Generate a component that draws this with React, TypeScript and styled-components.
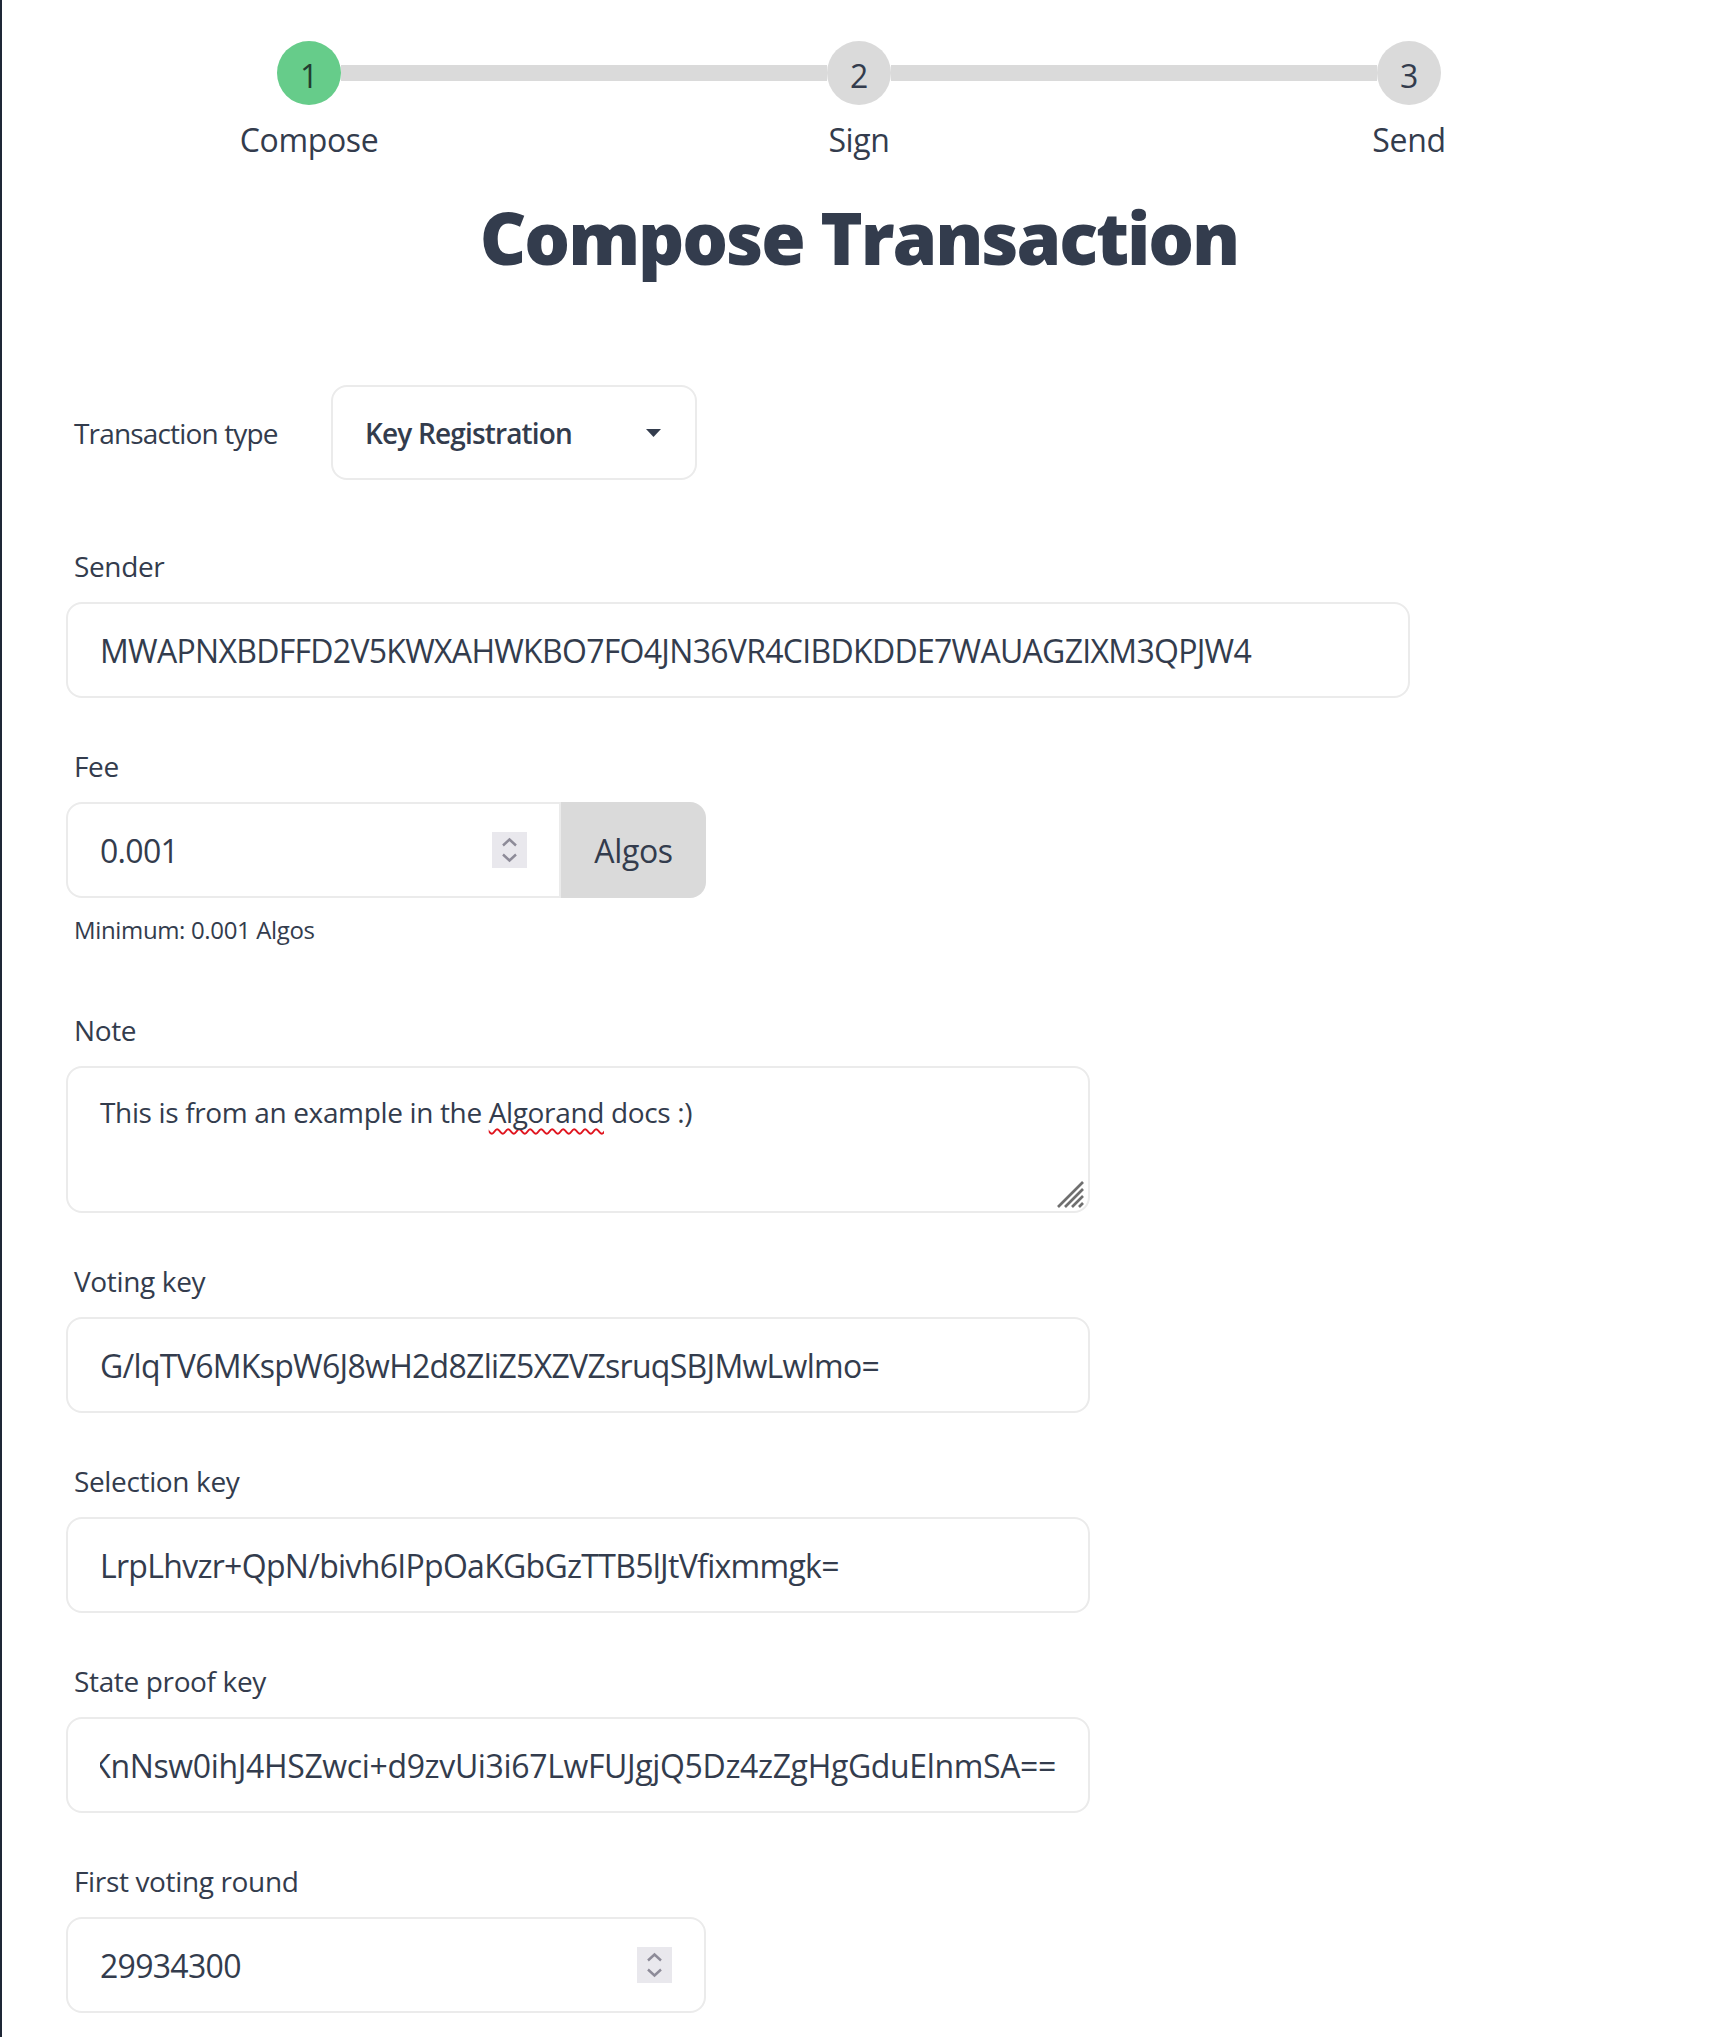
import React from "react";
import styled, { createGlobalStyle } from "styled-components";

const FONT = `"Open Sans", "Noto Sans", sans-serif`;
const TEXT = "#333c4d";
const BORDER = "#ebebeb";
const GRAY = "#dadada";
const TRACK = "-0.022em";

const GlobalStyle = createGlobalStyle`
  html, body { margin: 0; padding: 0; background: #ffffff; }
  body { font-family: ${FONT}; color: ${TEXT}; letter-spacing: ${TRACK}; }
  *, *::before, *::after { box-sizing: border-box; }
`;

const Shell = styled.div`
  min-height: 100vh;
  border-left: 2px solid #1e2736;
  padding: 41px 32px 80px 32px;
`;

const Steps = styled.ol`
  list-style: none;
  margin: 0;
  padding: 0;
  display: grid;
  grid-template-columns: repeat(3, 1fr);
`;

const Step = styled.li`
  display: flex;
  flex-direction: column;
`;

const Track = styled.div`
  display: flex;
  align-items: center;
  height: 64px;
`;

const Connector = styled.span<{ $hidden?: boolean }>`
  flex: 1;
  height: 16px;
  background: ${(p) => (p.$hidden ? "transparent" : GRAY)};
`;

const Bubble = styled.span<{ $active?: boolean }>`
  width: 64px;
  height: 64px;
  flex: 0 0 64px;
  border-radius: 50%;
  display: flex;
  align-items: center;
  justify-content: center;
  padding-top: 5px;
  background: ${(p) => (p.$active ? "#66cc8a" : GRAY)};
  color: ${(p) => (p.$active ? "#223d30" : TEXT)};
  font-size: 32px;
  line-height: 1;
`;

const StepLabel = styled.span`
  text-align: center;
  font-size: 32px;
  line-height: 48px;
  margin-top: 11px;
`;

const Title = styled.h1`
  margin: 33px 0 0;
  text-align: center;
  font-size: 72px;
  line-height: 80px;
  font-weight: 800;
  letter-spacing: -0.029em;
  color: ${TEXT};
`;

const Form = styled.form`
  display: flex;
  flex-direction: column;
  padding-left: 32px;
  margin-top: 108px;
`;

const TypeRow = styled.div`
  display: grid;
  grid-template-columns: 265px auto;
  align-items: center;
  justify-content: start;
  margin-bottom: 50px;
`;

const TypeLabel = styled.label`
  padding: 0 8px;
  font-size: 28px;
  line-height: 40px;
  letter-spacing: -0.03em;
`;

const SelectBox = styled.div`
  width: 366px;
  height: 95px;
  border: 2px solid ${BORDER};
  border-radius: 16px;
  padding: 0 34px 0 32px;
  display: flex;
  align-items: center;
  justify-content: space-between;
  font-size: 28px;
  font-weight: 600;
  letter-spacing: -0.03em;
`;

const Fields = styled.div`
  display: flex;
  flex-direction: column;
  gap: 32px;
`;

const Control = styled.div<{ $max: number }>`
  display: flex;
  flex-direction: column;
  width: 100%;
  max-width: ${(p) => p.$max}px;
`;

const FieldLabel = styled.label`
  display: block;
  padding: 16px 8px;
  font-size: 28px;
  line-height: 40px;
`;

const Hint = styled.span`
  display: block;
  padding: 16px 8px;
  font-size: 24px;
  line-height: 32px;
`;

const TextInput = styled.input`
  height: 96px;
  width: 100%;
  border: 2px solid ${BORDER};
  border-radius: 16px;
  padding: 0 32px;
  font-family: ${FONT};
  font-size: 32px;
  letter-spacing: ${TRACK};
  color: ${TEXT};
  background: #ffffff;
  outline: none;
`;

const FieldBox = styled.div<{ $joined?: boolean }>`
  flex: ${(p) => (p.$joined ? "1 1 0" : "0 0 auto")};
  min-width: 0;
  height: 96px;
  border: 2px solid ${BORDER};
  border-radius: ${(p) => (p.$joined ? "16px 0 0 16px" : "16px")};
  padding: 0 32px;
  display: flex;
  align-items: center;
  background: #ffffff;
`;

const BareInput = styled.input`
  flex: 1 1 0;
  width: 0;
  min-width: 0;
  border: none;
  outline: none;
  padding: 0;
  font-family: ${FONT};
  font-size: 32px;
  letter-spacing: ${TRACK};
  color: ${TEXT};
  background: transparent;
`;

const Clip = styled.div`
  flex: 1;
  min-width: 0;
  overflow: hidden;
  display: flex;
  justify-content: flex-end;
  white-space: nowrap;
  font-size: 32px;
`;

const ClipText = styled.span`
  flex-shrink: 0;
`;

const Join = styled.div`
  display: flex;
  width: 640px;
`;

const Addon = styled.span`
  flex: 0 0 145px;
  display: flex;
  align-items: center;
  justify-content: center;
  background: ${GRAY};
  border-radius: 0 16px 16px 0;
  font-size: 32px;
`;

const Spin = styled.svg`
  flex: 0 0 35px;
  width: 35px;
  height: 36px;
  display: block;
`;

const NoteBox = styled.div`
  position: relative;
  height: 147px;
  border: 2px solid ${BORDER};
  border-radius: 16px;
  padding: 16px 32px;
  font-size: 28px;
  line-height: 56px;
`;

const Misspelled = styled.span`
  text-decoration: underline wavy #e0141e;
  text-decoration-thickness: 1.5px;
  text-underline-offset: 5px;
  text-decoration-skip-ink: none;
`;

const Grip = styled.svg`
  position: absolute;
  right: 3px;
  bottom: 2px;
  width: 30px;
  height: 30px;
`;

const Caret = () => (
  <svg width="15" height="8" viewBox="0 0 15 8" aria-hidden="true">
    <path d="M0 0 H15 L7.5 8 Z" fill={TEXT} />
  </svg>
);

const Spinner = () => (
  <Spin viewBox="0 0 35 36" aria-hidden="true">
    <rect width="35" height="36" fill="#e9e8ed" />
    <path d="M11 13.5 L17.5 7.5 L24 13.5" fill="none" stroke="#8d8b98" strokeWidth="2.4" />
    <path d="M11 22.5 L17.5 28.5 L24 22.5" fill="none" stroke="#8d8b98" strokeWidth="2.4" />
  </Spin>
);

const steps = ["Compose", "Sign", "Send"];

export default function App() {
  return (
    <>
      <GlobalStyle />
      <Shell>
        <Steps>
          {steps.map((s, i) => (
            <Step key={s}>
              <Track>
                <Connector $hidden={i === 0} />
                <Bubble $active={i === 0}>{i + 1}</Bubble>
                <Connector $hidden={i === steps.length - 1} />
              </Track>
              <StepLabel>{s}</StepLabel>
            </Step>
          ))}
        </Steps>

        <Title>Compose Transaction</Title>

        <Form onSubmit={(e) => e.preventDefault()}>
          <TypeRow>
            <TypeLabel>Transaction type</TypeLabel>
            <SelectBox role="combobox">
              <span>Key Registration</span>
              <Caret />
            </SelectBox>
          </TypeRow>

          <Fields>
            <Control $max={1344}>
              <FieldLabel>Sender</FieldLabel>
              <TextInput readOnly value="MWAPNXBDFFD2V5KWXAHWKBO7FO4JN36VR4CIBDKDDE7WAUAGZIXM3QPJW4" />
            </Control>

            <Control $max={1344}>
              <FieldLabel>Fee</FieldLabel>
              <Join>
                <FieldBox $joined>
                  <BareInput readOnly value="0.001" />
                  <Spinner />
                </FieldBox>
                <Addon>Algos</Addon>
              </Join>
              <Hint>Minimum: 0.001 Algos</Hint>
            </Control>

            <Control $max={1024}>
              <FieldLabel>Note</FieldLabel>
              <NoteBox role="textbox">
                This is from an example in the <Misspelled>Algorand</Misspelled> docs :)
                <Grip viewBox="0 0 30 30" aria-hidden="true">
                  <g stroke="#6f6f6f" strokeWidth="2.6" strokeLinecap="butt">
                    <line x1="3" y1="28" x2="28" y2="3" />
                    <line x1="10" y1="28" x2="28" y2="10" />
                    <line x1="17" y1="28" x2="28" y2="17" />
                    <line x1="24" y1="28" x2="28" y2="24" />
                  </g>
                </Grip>
              </NoteBox>
            </Control>

            <Control $max={1024}>
              <FieldLabel>Voting key</FieldLabel>
              <TextInput readOnly value="G/lqTV6MKspW6J8wH2d8ZliZ5XZVZsruqSBJMwLwlmo=" />
            </Control>

            <Control $max={1024}>
              <FieldLabel>Selection key</FieldLabel>
              <TextInput readOnly value="LrpLhvzr+QpN/bivh6IPpOaKGbGzTTB5lJtVfixmmgk=" />
            </Control>

            <Control $max={1024}>
              <FieldLabel>State proof key</FieldLabel>
              <FieldBox>
                <Clip>
                  <ClipText>RpUpNWfZMjZ1zOOjv3MF2tjO714jsBt0GKnNsw0ihJ4HSZwci+d9zvUi3i67LwFUJgjQ5Dz4zZgHgGduElnmSA==</ClipText>
                </Clip>
              </FieldBox>
            </Control>

            <Control $max={640}>
              <FieldLabel>First voting round</FieldLabel>
              <FieldBox>
                <BareInput readOnly value="29934300" />
                <Spinner />
              </FieldBox>
            </Control>
          </Fields>
        </Form>
      </Shell>
    </>
  );
}
